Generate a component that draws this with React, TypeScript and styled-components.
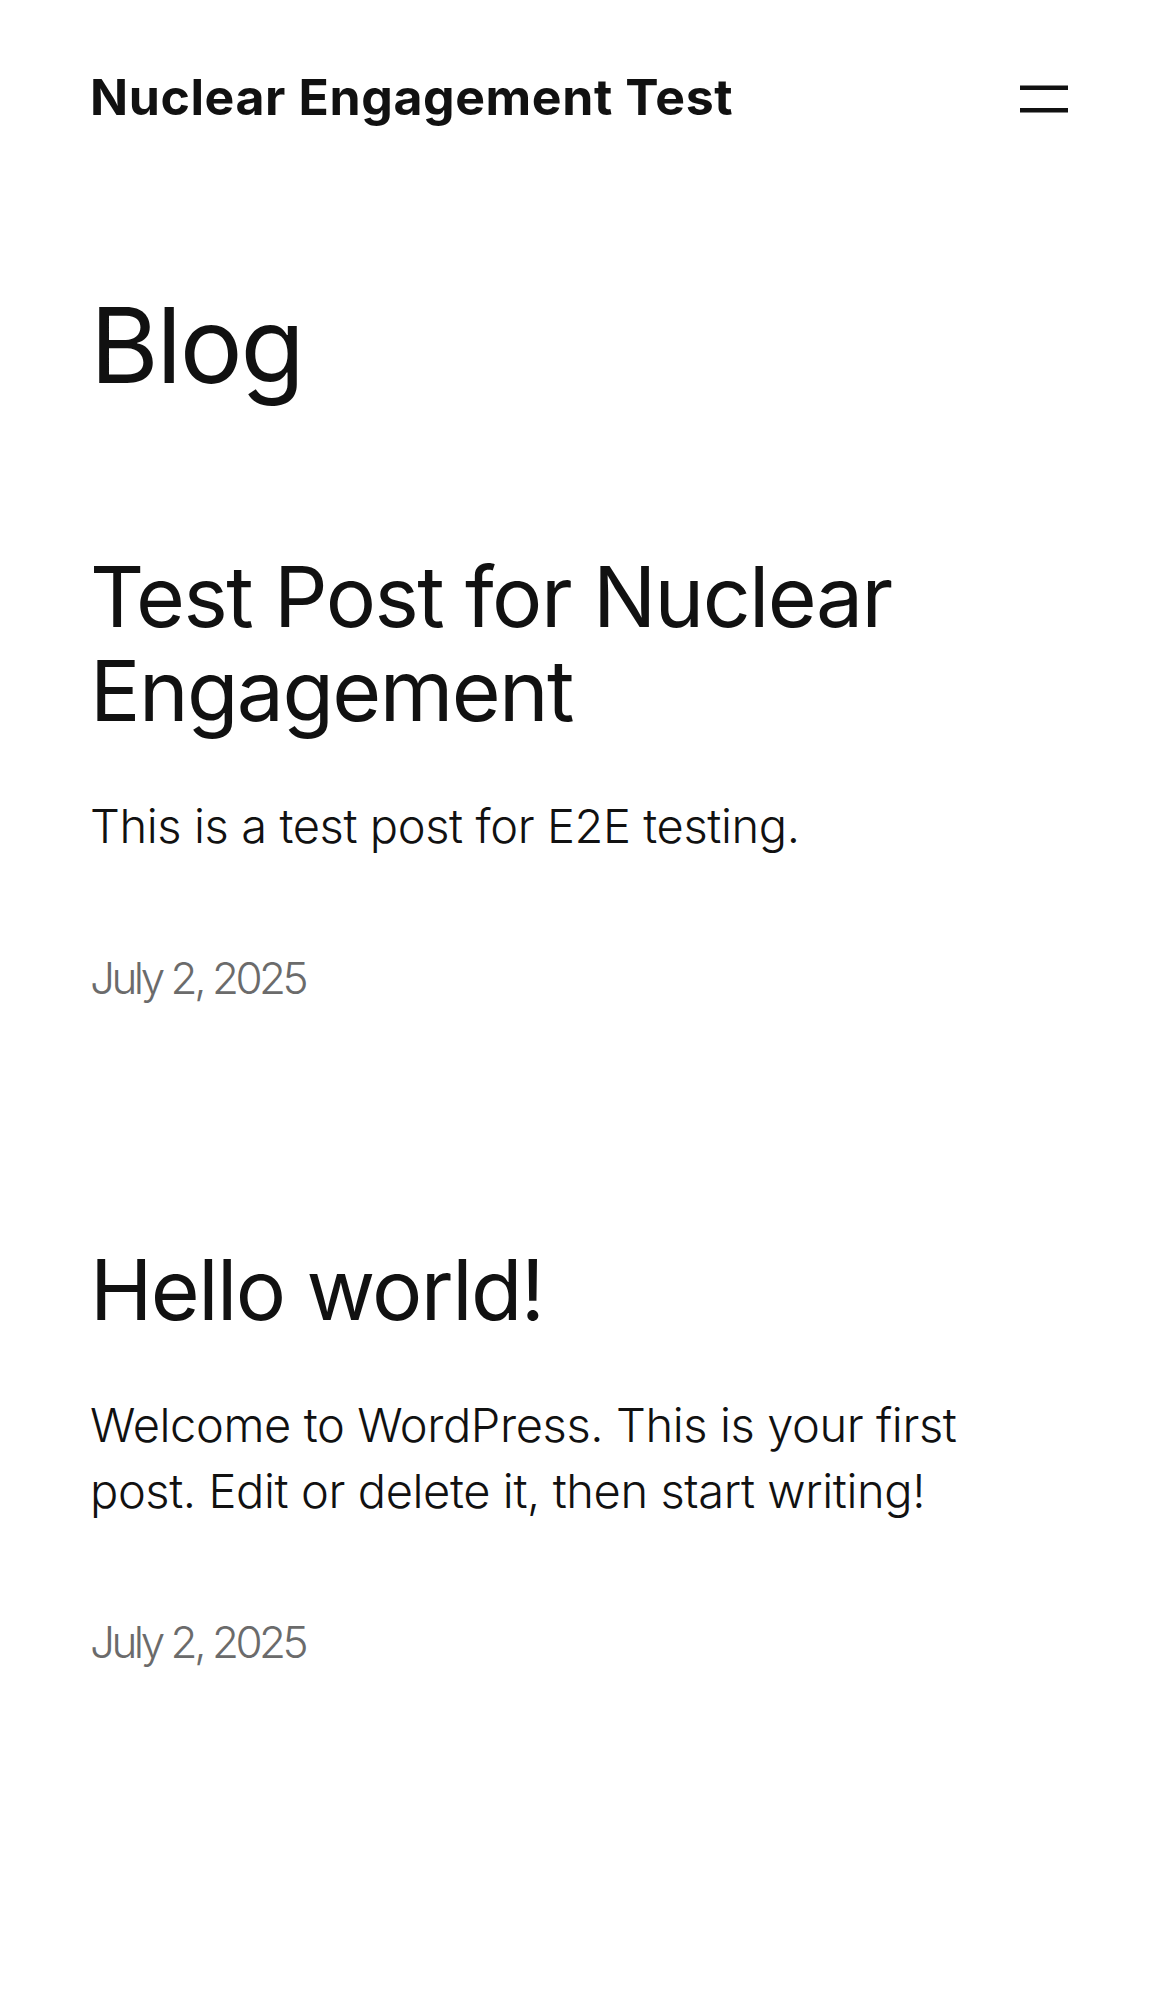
import styled, { createGlobalStyle } from 'styled-components';

const GlobalStyle = createGlobalStyle`
	html, body {
		margin: 0;
		padding: 0;
		background: #ffffff;
	}
	body {
		font-family: Inter, 'Noto Sans', sans-serif;
		color: #111111;
		-webkit-font-smoothing: antialiased;
	}
`;

const Page = styled.div`
	min-height: 1992px;
	padding: 0 90px;
	box-sizing: border-box;
`;

const Header = styled.header`
	display: flex;
	justify-content: space-between;
	align-items: flex-start;
	padding-top: 63px;
	height: 72px;
`;

const SiteTitle = styled.a`
	margin-top: 2px;
	font-size: 50px;
	line-height: 65px;
	font-weight: 700;
	letter-spacing: 0.6px;
	color: #111111;
	text-decoration: none;
`;

const MenuButton = styled.button`
	width: 72px;
	height: 72px;
	padding: 0;
	border: none;
	background: transparent;
	cursor: pointer;
	display: flex;
	align-items: center;
	justify-content: center;
`;

const Main = styled.main`
	display: flex;
	flex-direction: column;
`;

const PageTitle = styled.h1`
	margin: 147px 0 0;
	font-size: 105px;
	line-height: 126px;
	font-weight: 400;
	letter-spacing: -2.2px;
`;

const PostList = styled.ul`
	list-style: none;
	margin: 142px 0 0;
	padding: 0;
	display: flex;
	flex-direction: column;
	gap: 234px;
`;

const Post = styled.li`
	display: flex;
	flex-direction: column;
`;

const PostTitle = styled.h2`
	margin: 0;
	font-size: 84px;
	line-height: 94px;
	font-weight: 400;
	letter-spacing: -1.6px;
`;

const Excerpt = styled.p`
	margin: 55px 0 0;
	max-width: 900px;
	font-size: 47px;
	line-height: 65.5px;
	font-weight: 300;
	letter-spacing: -0.4px;
`;

const DateText = styled.time`
	display: block;
	margin-top: 89px;
	font-size: 44px;
	line-height: 61.6px;
	font-weight: 300;
	letter-spacing: -3.5px;
	color: #6b6b6b;
`;

const posts = [
	{
		title: 'Test Post for Nuclear Engagement',
		excerpt: 'This is a test post for E2E testing.',
		date: 'July 2, 2025',
	},
	{
		title: 'Hello world!',
		excerpt: 'Welcome to WordPress. This is your first post. Edit or delete it, then start writing!',
		date: 'July 2, 2025',
	},
];

const MenuIcon = () => (
	<svg width="72" height="72" viewBox="0 0 24 24" aria-hidden="true">
		<path d="M4 7.5h16v1.5H4zM4 15h16v1.5H4z" fill="#111111" />
	</svg>
);

const App = () => {
	return (
		<>
			<GlobalStyle />
			<Page>
				<Header>
					<SiteTitle href="#">Nuclear Engagement Test</SiteTitle>
					<MenuButton aria-label="Open menu">
						<MenuIcon />
					</MenuButton>
				</Header>
				<Main>
					<PageTitle>Blog</PageTitle>
					<PostList>
						{posts.map((post) => (
							<Post key={post.title}>
								<PostTitle>{post.title}</PostTitle>
								<Excerpt>{post.excerpt}</Excerpt>
								<DateText>{post.date}</DateText>
							</Post>
						))}
					</PostList>
				</Main>
			</Page>
		</>
	);
};

export default App;
